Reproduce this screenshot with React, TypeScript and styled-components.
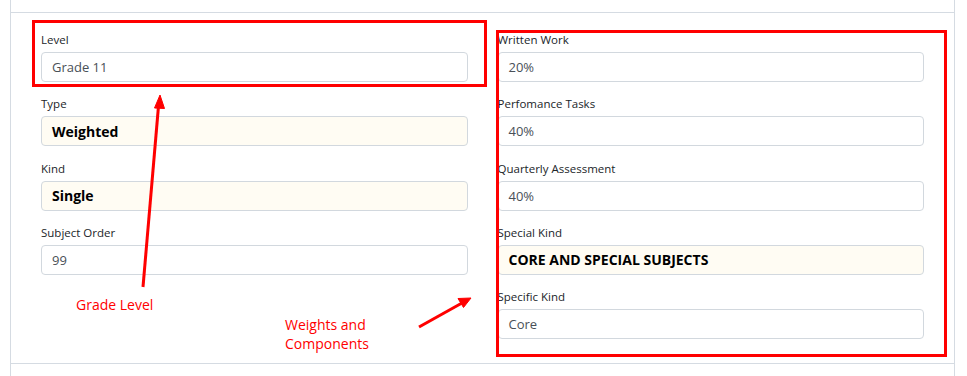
import styled, { createGlobalStyle } from 'styled-components';

const GlobalStyle = createGlobalStyle`
  html, body {
    margin: 0;
    padding: 0;
    background: #ffffff;
  }
  body {
    font-family: 'Open Sans', 'Noto Sans', sans-serif;
    color: #212529;
  }
`;

type Field = {
  label: string;
  value: string;
  strong?: boolean;
};

const leftFields: Field[] = [
  { label: 'Level', value: 'Grade 11' },
  { label: 'Type', value: 'Weighted', strong: true },
  { label: 'Kind', value: 'Single', strong: true },
  { label: 'Subject Order', value: '99' },
];

const rightFields: Field[] = [
  { label: 'Written Work', value: '20%' },
  { label: 'Perfomance Tasks', value: '40%' },
  { label: 'Quarterly Assessment', value: '40%' },
  { label: 'Special Kind', value: 'CORE AND SPECIAL SUBJECTS', strong: true },
  { label: 'Specific Kind', value: 'Core' },
];

export default function App() {
  return (
    <>
      <GlobalStyle />
      <Page>
        <Card>
          <CardHeader />
          <CardBody>
            <Column>
              {leftFields.map(f => (
                <FormGroup key={f.label}>
                  <Label>{f.label}</Label>
                  <ValueBox $strong={f.strong}>{f.value}</ValueBox>
                </FormGroup>
              ))}
            </Column>
            <Column>
              {rightFields.map(f => (
                <FormGroup key={f.label}>
                  <Label>{f.label}</Label>
                  <ValueBox $strong={f.strong}>{f.value}</ValueBox>
                </FormGroup>
              ))}
            </Column>
          </CardBody>
          <CardFooter />

          {/* annotations drawn over the form */}
          <Highlight $left={21} $top={20} $width={455} $height={67} />
          <Highlight $left={485} $top={30} $width={451} $height={327} />
          <Arrows width="967" height="376" viewBox="0 0 967 376">
            <line x1="142" y1="287" x2="157.5" y2="106" stroke="#ff0000" strokeWidth="3" />
            <polygon points="159,95 153.5,108 163.5,108.5" fill="#ff0000" stroke="#ff0000" strokeWidth="1" />
            <line x1="418" y1="327" x2="461" y2="303" stroke="#ff0000" strokeWidth="3" />
            <polygon points="470,298 457,298.5 462.5,307.5" fill="#ff0000" stroke="#ff0000" strokeWidth="1" />
          </Arrows>
          <Note $left={65} $top={295}>Grade Level</Note>
          <Note $left={274} $top={315}>
            Weights and
            <br />
            Components
          </Note>
        </Card>
      </Page>
    </>
  );
}

const Page = styled.div`
  padding: 0 12px 0 10px;
  width: 945px;
`;

const Card = styled.div`
  position: relative;
  border-left: 1px solid #d5dbe2;
  border-right: 1px solid #d5dbe2;
`;

const CardHeader = styled.div`
  height: 12px;
  border-bottom: 1px solid #d5dbe2;
`;

const CardBody = styled.div`
  display: grid;
  grid-template-columns: 1fr 1fr;
  column-gap: 30px;
  padding: 18px 30px 0;
  height: 351px;
  box-sizing: border-box;
  border-bottom: 1px solid #d5dbe2;
`;

const CardFooter = styled.div`
  height: 12px;
`;

const Column = styled.div`
  display: flex;
  flex-direction: column;
  gap: 13.25px;
`;

const FormGroup = styled.div`
  display: flex;
  flex-direction: column;
  gap: 3px;
`;

const Label = styled.label`
  font-size: 11.5px;
  line-height: 18px;
  color: #212529;
`;

const ValueBox = styled.div<{ $strong?: boolean }>`
  box-sizing: border-box;
  height: 30px;
  padding: 0 10px;
  display: flex;
  align-items: center;
  border: 1px solid #d2d8de;
  border-radius: 4px;
  font-size: ${p => (p.$strong ? '14px' : '13px')};
  background: ${p => (p.$strong ? '#fffcf3' : '#ffffff')};
  color: ${p => (p.$strong ? '#000000' : '#495057')};
  font-weight: ${p => (p.$strong ? 700 : 400)};
`;

const Highlight = styled.div<{ $left: number; $top: number; $width: number; $height: number }>`
  position: absolute;
  left: ${p => p.$left}px;
  top: ${p => p.$top}px;
  width: ${p => p.$width}px;
  height: ${p => p.$height}px;
  box-sizing: border-box;
  border: 3px solid #ff0000;
  pointer-events: none;
`;

const Arrows = styled.svg`
  position: absolute;
  left: -10px;
  top: 0;
  pointer-events: none;
  overflow: visible;
`;

const Note = styled.div<{ $left: number; $top: number }>`
  position: absolute;
  left: ${p => p.$left}px;
  top: ${p => p.$top}px;
  font-size: 14px;
  line-height: 19px;
  color: #ff0000;
`;
